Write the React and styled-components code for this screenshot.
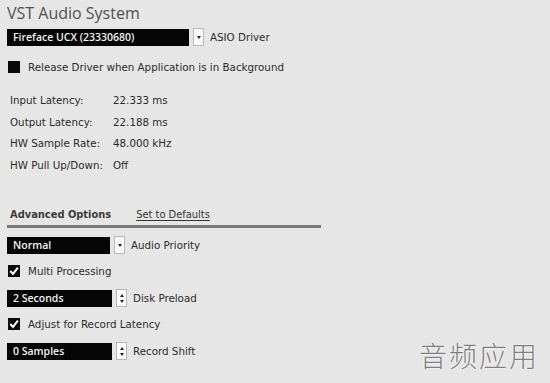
import React from "react";
import styled, { createGlobalStyle } from "styled-components";

const Global = createGlobalStyle`
  html, body { margin: 0; padding: 0; background: #e6e6e6; }
  body { font-family: "DejaVu Sans", "Noto Sans", sans-serif; }
`;

const Page = styled.div`
  position: relative;
  width: 550px;
  height: 383px;
  background: #e6e6e6;
  color: #2a2a2a;
  font-size: 10.3px;
  padding: 3px 0 0 7px;
  box-sizing: border-box;
  overflow: hidden;
`;

const Title = styled.div`
  font-family: "Open Sans", sans-serif;
  font-size: 16px;
  color: #505050;
  height: 22px;
  line-height: 20px;
`;

const Row = styled.div`
  display: flex;
  align-items: center;
  gap: ${(p) => p.$gap ?? 6}px;
  height: ${(p) => p.$h ?? 18}px;
  margin-top: ${(p) => p.$mt ?? 0}px;
`;

const Field = styled.div`
  width: ${(p) => p.$w}px;
  height: 17px;
  background: #050505;
  color: #f2f2f2;
  font-family: "Open Sans", sans-serif;
  font-weight: 600;
  font-size: 10.5px;
  line-height: 17px;
  padding-left: 6px;
  box-sizing: border-box;
`;

const SideButton = styled.div`
  width: 11px;
  height: 18px;
  background: #fbfbfb;
  border: 1px solid #b8b8b8;
  box-sizing: border-box;
  display: flex;
  flex-direction: column;
  align-items: center;
  justify-content: center;
  gap: 3px;
  margin-left: -2px;
`;

const Caret = styled.span`
  width: 0;
  height: 0;
  border-left: 2.5px solid transparent;
  border-right: 2.5px solid transparent;
  ${(p) =>
    p.$up
      ? "border-bottom: 3px solid #222;"
      : "border-top: 3px solid #222;"}
`;

const Label = styled.span`
  white-space: nowrap;
`;

const Box = styled.div`
  width: 12px;
  height: 12px;
  background: #0a0a0a;
  margin-left: 1px;
  display: flex;
  align-items: center;
  justify-content: center;
`;

const Info = styled.div`
  display: grid;
  grid-template-columns: 103px auto;
  margin: 14px 0 0 3px;
`;

const InfoCell = styled.div`
  height: 21.5px;
  line-height: 21px;
  white-space: nowrap;
`;

const Tabs = styled.div`
  display: flex;
  align-items: flex-end;
  width: 311px;
  height: 20px;
  margin-top: 29px;
  border-bottom: 3px solid #7a7a7a;
  gap: 25px;
  padding-left: 3px;
  box-sizing: content-box;
`;

const Tab = styled.span`
  font-size: 9.9px;
  font-weight: ${(p) => (p.$active ? "bold" : "normal")};
  color: ${(p) => (p.$active ? "#3a3a3a" : "#333")};
  text-decoration: ${(p) => (p.$link ? "underline" : "none")};
  text-underline-offset: 2px;
  padding-bottom: 5px;
  white-space: nowrap;
`;

const Watermark = styled.div`
  position: absolute;
  right: 11px;
  bottom: 8px;
  font-family: "Noto Sans CJK SC", sans-serif;
  font-weight: 300;
  font-size: 28px;
  color: #7d7d7d;
  letter-spacing: 2px;
  text-shadow: 0 0 2px #fff, 0 0 1px #fff;
`;

const Check = () => (
  <Box>
    <svg width="10" height="10" viewBox="0 0 10 10">
      <path d="M1.3 5 L4 7.9 L8.9 1.6" stroke="#fff" strokeWidth="2" fill="none" />
    </svg>
  </Box>
);

const Dropdown = ({ w, value, label }) => (
  <Row $gap={6}>
    <Field $w={w}>{value}</Field>
    <SideButton>
      <Caret />
    </SideButton>
    <Label>{label}</Label>
  </Row>
);

const Spinner = ({ w, value, label }) => (
  <Row $mt={9}>
    <Field $w={w}>{value}</Field>
    <SideButton>
      <Caret $up />
      <Caret />
    </SideButton>
    <Label>{label}</Label>
  </Row>
);

const CheckRow = ({ checked, label, mt }) => (
  <Row $mt={mt} $gap={8}>
    {checked ? <Check /> : <Box />}
    <Label>{label}</Label>
  </Row>
);

export default function App() {
  return (
    <>
      <Global />
      <Page>
        <Title>VST Audio System</Title>
        <Row $mt={3}>
          <Dropdown w={182} value="Fireface UCX (23330680)" label="ASIO Driver" />
        </Row>
        <CheckRow mt={12} label="Release Driver when Application is in Background" />
        <Info>
          <InfoCell>Input Latency:</InfoCell>
          <InfoCell>22.333 ms</InfoCell>
          <InfoCell>Output Latency:</InfoCell>
          <InfoCell>22.188 ms</InfoCell>
          <InfoCell>HW Sample Rate:</InfoCell>
          <InfoCell>48.000 kHz</InfoCell>
          <InfoCell>HW Pull Up/Down:</InfoCell>
          <InfoCell>Off</InfoCell>
        </Info>
        <Tabs>
          <Tab $active>Advanced Options</Tab>
          <Tab $link>Set to Defaults</Tab>
        </Tabs>
        <Row $mt={8}>
          <Dropdown w={103} value="Normal" label="Audio Priority" />
        </Row>
        <CheckRow checked mt={8} label="Multi Processing" />
        <Spinner w={105} value="2 Seconds" label="Disk Preload" />
        <CheckRow checked mt={8} label="Adjust for Record Latency" />
        <Spinner w={105} value="0 Samples" label="Record Shift" />
        <Watermark>音频应用</Watermark>
      </Page>
    </>
  );
}
